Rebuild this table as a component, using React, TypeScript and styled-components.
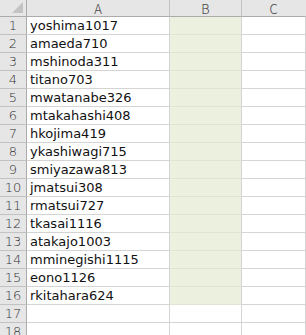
import React from "react";
import styled, { createGlobalStyle } from "styled-components";

const GlobalStyle = createGlobalStyle`
  html, body {
    margin: 0;
    padding: 0;
    background: #ffffff;
  }
  body {
    font-family: "Noto Sans CJK JP", "Liberation Sans", sans-serif;
    overflow: hidden;
  }
`;

const Sheet = styled.div`
  display: grid;
  grid-template-columns: 27px 143px 72px 1fr;
  grid-auto-rows: 18px;
  grid-template-rows: 17px;
  width: 306px;
  height: 335px;
  overflow: hidden;
`;

const Corner = styled.div`
  position: relative;
  background: #e6e6e6;
  border-right: 1px solid #ababab;
  border-bottom: 1px solid #ababab;
  &::after {
    content: "";
    position: absolute;
    right: 3px;
    bottom: 3px;
    width: 0;
    height: 0;
    border-left: 11px solid transparent;
    border-bottom: 11px solid #c3c3c3;
  }
`;

const ColHead = styled.div<{ $last?: boolean }>`
  background: #e6e6e6;
  border-right: 1px solid ${(p) => (p.$last ? "#e6e6e6" : "#c2c2c2")};
  border-bottom: 1px solid #ababab;
  display: flex;
  align-items: center;
  justify-content: center;
  font-size: 13px;
  font-weight: 300;
  color: #444444;
  line-height: 1;
`;

const RowHead = styled.div`
  background: #e6e6e6;
  border-right: 1px solid #ababab;
  border-bottom: 1px solid #c2c2c2;
  display: flex;
  align-items: center;
  justify-content: center;
  font-family: "DejaVu Sans", "Liberation Sans", sans-serif;
  font-size: 13px;
  font-weight: 300;
  color: #333333;
  line-height: 1;
  overflow: hidden;
`;

const Cell = styled.div<{ $fill?: boolean }>`
  background: ${(p) => (p.$fill ? "#ebf1de" : "#ffffff")};
  border-right: 1px solid #d4d4d4;
  border-bottom: 1px solid ${(p) => (p.$fill ? "#dfe4d3" : "#d4d4d4")};
  display: flex;
  align-items: center;
  padding-left: 3px;
  font-family: "DejaVu Sans", "Liberation Sans", sans-serif;
  font-size: 13px;
  color: #111111;
  line-height: 1;
  white-space: nowrap;
  overflow: hidden;
`;

const ids = [
  "yoshima1017",
  "amaeda710",
  "mshinoda311",
  "titano703",
  "mwatanabe326",
  "mtakahashi408",
  "hkojima419",
  "ykashiwagi715",
  "smiyazawa813",
  "jmatsui308",
  "rmatsui727",
  "tkasai1116",
  "atakajo1003",
  "mminegishi1115",
  "eono1126",
  "rkitahara624",
  "",
  "",
];

const App: React.FC = () => {
  return (
    <>
      <GlobalStyle />
      <Sheet>
        <Corner />
        <ColHead>A</ColHead>
        <ColHead>B</ColHead>
        <ColHead $last>C</ColHead>
        {ids.map((id, i) => (
          <React.Fragment key={i}>
            <RowHead>{i + 1}</RowHead>
            <Cell>{id}</Cell>
            <Cell $fill={i < 16} />
            <Cell />
          </React.Fragment>
        ))}
      </Sheet>
    </>
  );
};

export default App;
